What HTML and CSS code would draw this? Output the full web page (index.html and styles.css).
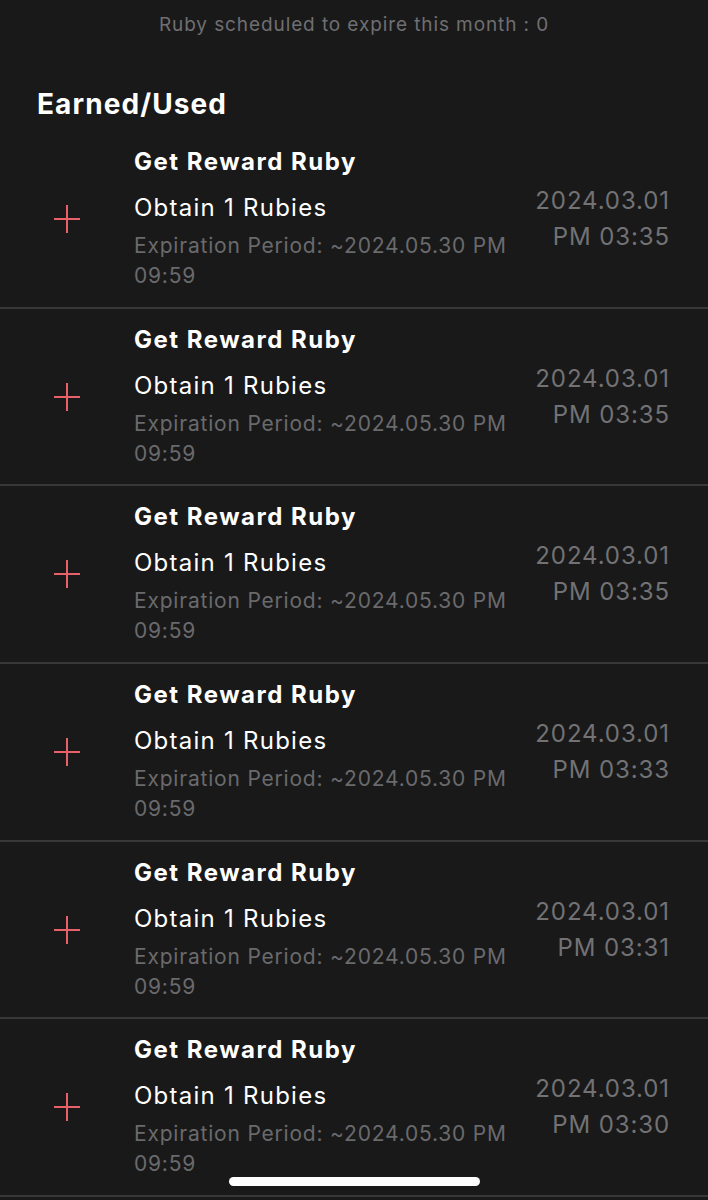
FILE: index.html
```html
<!DOCTYPE html>
<html>
<head>
<meta charset="utf-8">
<link rel="stylesheet" href="styles.css">
</head>
<body>
<div class="screen">
  <div class="notice">Ruby scheduled to expire this month : 0</div>
  <h2 class="heading">Earned/Used</h2>
  <ul class="list">
    <li class="row">
      <div class="icon"><svg width="26" height="28" viewBox="0 0 26 28"><path d="M13 0V28M0 14H26" stroke="#e8606a" stroke-width="2"/></svg></div>
      <div class="info"><div class="title">Get Reward Ruby</div><div class="desc">Obtain 1 Rubies</div><div class="exp">Expiration Period: ~2024.05.30 PM 09:59</div></div>
      <div class="date">2024.03.01<br>PM 03:35</div>
    </li>
    <li class="row">
      <div class="icon"><svg width="26" height="28" viewBox="0 0 26 28"><path d="M13 0V28M0 14H26" stroke="#e8606a" stroke-width="2"/></svg></div>
      <div class="info"><div class="title">Get Reward Ruby</div><div class="desc">Obtain 1 Rubies</div><div class="exp">Expiration Period: ~2024.05.30 PM 09:59</div></div>
      <div class="date">2024.03.01<br>PM 03:35</div>
    </li>
    <li class="row">
      <div class="icon"><svg width="26" height="28" viewBox="0 0 26 28"><path d="M13 0V28M0 14H26" stroke="#e8606a" stroke-width="2"/></svg></div>
      <div class="info"><div class="title">Get Reward Ruby</div><div class="desc">Obtain 1 Rubies</div><div class="exp">Expiration Period: ~2024.05.30 PM 09:59</div></div>
      <div class="date">2024.03.01<br>PM 03:35</div>
    </li>
    <li class="row">
      <div class="icon"><svg width="26" height="28" viewBox="0 0 26 28"><path d="M13 0V28M0 14H26" stroke="#e8606a" stroke-width="2"/></svg></div>
      <div class="info"><div class="title">Get Reward Ruby</div><div class="desc">Obtain 1 Rubies</div><div class="exp">Expiration Period: ~2024.05.30 PM 09:59</div></div>
      <div class="date">2024.03.01<br>PM 03:33</div>
    </li>
    <li class="row">
      <div class="icon"><svg width="26" height="28" viewBox="0 0 26 28"><path d="M13 0V28M0 14H26" stroke="#e8606a" stroke-width="2"/></svg></div>
      <div class="info"><div class="title">Get Reward Ruby</div><div class="desc">Obtain 1 Rubies</div><div class="exp">Expiration Period: ~2024.05.30 PM 09:59</div></div>
      <div class="date">2024.03.01<br>PM 03:31</div>
    </li>
    <li class="row">
      <div class="icon"><svg width="26" height="28" viewBox="0 0 26 28"><path d="M13 0V28M0 14H26" stroke="#e8606a" stroke-width="2"/></svg></div>
      <div class="info"><div class="title">Get Reward Ruby</div><div class="desc">Obtain 1 Rubies</div><div class="exp">Expiration Period: ~2024.05.30 PM 09:59</div></div>
      <div class="date">2024.03.01<br>PM 03:30</div>
    </li>
  </ul>
  <div class="home-bar"></div>
</div>
</body>
</html>
```

FILE: styles.css
```css
* { box-sizing: border-box; }
html, body { margin: 0; padding: 0; background: #191919; }
body { font-family: Inter, "Noto Sans", sans-serif; color: #fff; }
.screen { width: 708px; height: 1200px; overflow: hidden; position: relative; background: #191919; }
.notice { text-align: center; color: #6f6f72; font-size: 19px; line-height: 26px; padding-top: 12px; letter-spacing: 0.9px; }
.heading { margin: 0; padding: 50px 0 0 37px; font-size: 28px; font-weight: 700; line-height: 32px; letter-spacing: 1.1px; }
.list { list-style: none; margin: 11px 0 0 0; padding: 0; }
.row { display: flex; align-items: center; height: 177.7px; border-bottom: 2px solid #38383a; }
.icon { width: 134px; padding-left: 54px; display: flex; align-items: center; }
.icon svg { display: block; }
.info { flex: 1; min-width: 0; }
.title { font-size: 24px; font-weight: 700; line-height: 30px; letter-spacing: 1.5px; }
.desc { font-size: 24px; line-height: 30px; margin-top: 16px; letter-spacing: 1.25px; }
.exp { font-size: 21px; line-height: 30px; color: #6a6a6d; margin-top: 8px; width: 390px; letter-spacing: 0.8px; }
.date { width: 180px; padding-right: 38px; text-align: right; font-size: 24px; line-height: 36px; color: #727275; letter-spacing: 0.9px; white-space: nowrap; }
.home-bar { position: absolute; left: 229px; top: 1177px; width: 251px; height: 9px; border-radius: 5px; background: #fff; }
```
